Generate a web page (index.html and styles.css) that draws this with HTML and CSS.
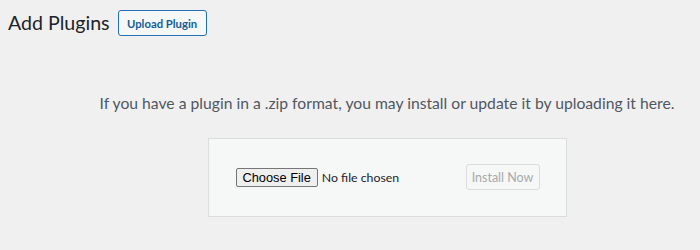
FILE: index.html
```html
<!DOCTYPE html>
<html>
<head>
<meta charset="utf-8">
<link rel="stylesheet" href="styles.css">
</head>
<body>
<div class="wrap">
  <div class="title-row">
    <h1 class="page-title">Add Plugins</h1>
    <a class="page-title-action" href="#">Upload Plugin</a>
  </div>
  <div class="upload-plugin">
    <p class="install-help">If you have a plugin in a .zip format, you may install or update it by uploading it here.</p>
    <form class="wp-upload-form">
      <input class="file-input" type="file" name="pluginzip">
      <button class="button-disabled" type="button" disabled>Install Now</button>
    </form>
  </div>
</div>
</body>
</html>
```
FILE: styles.css
```css
html, body {
  margin: 0;
  padding: 0;
  background: #f0f0f1;
  overflow: hidden;
}
body {
  font-family: Lato, "Liberation Sans", sans-serif;
  color: #1d2327;
}
.wrap {
  padding: 10px 8px 0 8px;
}
.title-row {
  display: flex;
  align-items: center;
  gap: 8px;
  height: 26px;
}
.page-title {
  margin: 0;
  font-size: 19.6px;
  font-weight: 400;
  line-height: 26px;
  color: #1d2327;
}
.page-title-action {
  display: inline-flex;
  align-items: center;
  justify-content: center;
  box-sizing: border-box;
  width: 89px;
  height: 26px;
  padding: 0;
  border: 1px solid #2271b1;
  border-radius: 3px;
  background: #f6f7f7;
  color: #135e96;
  font-size: 11.3px;
  font-weight: 700;
  text-decoration: none;
  white-space: nowrap;
}
.upload-plugin {
  padding-left: 74px;
  text-align: center;
}
.install-help {
  margin: 0;
  padding-top: 55px;
  font-size: 15.7px;
  line-height: 24px;
  color: #50575e;
}
.wp-upload-form {
  display: inline-flex;
  align-items: center;
  justify-content: space-between;
  width: 304px;
  margin-top: 23px;
  padding: 25px 26px 26px 27px;
  background: #f6f7f7;
  border: 1px solid #dcdcde;
  text-align: left;
}
.file-input {
  font-family: Lato, "Liberation Sans", sans-serif;
  font-size: 12.3px;
  color: #1d2327;
  width: 200px;
  padding: 0;
}
.file-input::file-selector-button {
  font-family: "Liberation Sans", Arial, sans-serif;
  font-size: 12.8px;
  margin-right: 4px;
  padding: 1px 6px;
  border: 1px solid #767676;
  border-radius: 2px;
  background: #efefef;
  color: #000;
}
.button-disabled {
  box-sizing: border-box;
  width: 74px;
  height: 26px;
  padding: 0;
  border: 1px solid #dcdcde;
  border-radius: 3px;
  background: #f6f7f7;
  color: #a7aaad;
  font-family: Lato, "Liberation Sans", sans-serif;
  font-size: 12.5px;
  white-space: nowrap;
}
```
